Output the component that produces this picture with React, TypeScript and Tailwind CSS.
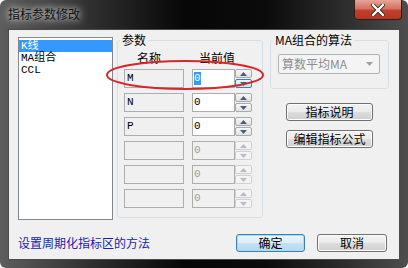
const cjk = "font-['Noto_Sans_CJK_SC',sans-serif]";
const mono = "font-['Liberation_Mono','Noto_Sans_CJK_SC',monospace]";

const Arrow = ({ up, color }: { up: boolean; color: string }) => (
  <svg width="7" height="4" viewBox="0 0 7 4">
    <path d={up ? "M0 4 L3.5 0 L7 4 Z" : "M0 0 L3.5 4 L7 0 Z"} fill={color} />
  </svg>
);

const Spinner = ({ enabled, hot }: { enabled: boolean; hot?: boolean }) => {
  const btn = enabled
    ? "border-[#a9a9a9] bg-[linear-gradient(#f7f7f7,#e3e3e3)]"
    : "border-[#cfcfcf] bg-[#f4f4f4]";
  const arrow = enabled ? "#4a5f80" : "#b9bdc3";
  return (
    <div className="flex flex-col gap-[1px] w-[17px] h-[19px]">
      <div className={`h-[9px] border rounded-[2px] flex items-center justify-center ${btn}`}>
        <Arrow up color={arrow} />
      </div>
      <div
        className={`h-[9px] border rounded-[2px] flex items-center justify-center ${
          hot ? "border-[#3c7fb1] bg-[linear-gradient(#eaf6fd,#bee6fd)]" : btn
        }`}
      >
        <Arrow up={false} color={arrow} />
      </div>
    </div>
  );
};

const ParamRow = ({ name, enabled, selected }: { name: string; enabled: boolean; selected?: boolean }) => (
  <div className="flex items-start h-[19px]">
    <div className={`w-[60px] h-[19px] border border-[#adadad] bg-[#f0f0f0] pl-[2px] pt-[2px] text-[11px] leading-[13px] text-black ${mono}`}>
      {name}
    </div>
    <div
      className={`ml-[8px] w-[43px] h-[19px] border border-[#adadad] pl-[1px] pt-[2px] text-[11px] leading-[13px] ${mono} ${
        enabled ? "bg-white text-black" : "bg-[#f0f0f0] text-[#9c9c9c]"
      }`}
    >
      {selected ? <span className="inline-block bg-[#3399ff] text-white w-[7px]">0</span> : "0"}
    </div>
    <Spinner enabled={enabled} hot={selected} />
  </div>
);

const WinButton = ({ label, width, isDefault }: { label: string; width: string; isDefault?: boolean }) => (
  <div
    className={`${width} h-[18px] rounded-[3px] border flex items-center justify-center text-[12px] text-black ${cjk} ${
      isDefault
        ? "border-[#3c7fb1] bg-[linear-gradient(#ecf6fc_0%,#dcecf8_50%,#c6e1f5_51%,#b4d8f2_100%)] shadow-[inset_0_0_0_1px_#a8dcf6]"
        : "border-[#707070] bg-[linear-gradient(#f2f2f2_0%,#ebebeb_50%,#dddddd_51%,#cfcfcf_100%)] shadow-[inset_0_0_0_1px_#fcfcfc]"
    }`}
  >
    {label}
  </div>
);

export default function App() {
  return (
    <div className="relative w-[408px] h-[268px] overflow-hidden rounded-[6px] bg-[linear-gradient(90deg,#5d5d5d_0%,#303030_22%,#070707_45%,#0b0b0b_65%,#2e2e2e_85%,#4e4e4e_100%)] flex flex-col">
      {/* Title bar */}
      <div className="h-[29px] flex items-start shrink-0">
        <div className={`ml-[8px] mt-[7px] text-[12px] leading-[14px] text-[#111] ${cjk} [text-shadow:0_0_6px_rgba(255,255,255,0.9),0_0_12px_rgba(255,255,255,0.6)]`}>
          指标参数修改
        </div>
        <div className="ml-auto mr-[6px] w-[48px] h-[20px] rounded-b-[4px] border border-t-0 border-[#3a1a14] bg-[linear-gradient(#e7a597_0%,#d47262_45%,#c2402b_55%,#b23621_100%)] flex items-center justify-center">
          <svg width="14" height="12" viewBox="0 0 14 12">
            <path d="M2 1 L12 11 M12 1 L2 11" stroke="#3a2a2a" strokeWidth="4" strokeLinecap="round" />
            <path d="M2 1 L12 11 M12 1 L2 11" stroke="#ffffff" strokeWidth="2.4" strokeLinecap="round" />
          </svg>
        </div>
      </div>

      {/* Client area */}
      <div className="mx-[8px] h-[231px] border border-[#4a4a4a] bg-[#f0f0f0] pl-[9px] pt-[3px] flex flex-col">
        <div className="flex items-start">
          {/* Indicator list */}
          <div className={`mt-[4px] w-[95px] h-[183px] border border-[#828790] bg-white pt-[2px] text-[11px] leading-[12px] ${mono}`}>
            <div className="bg-[#3399ff] text-white pl-[2px] h-[12px]">K线</div>
            <div className="pl-[2px] h-[12px] text-black">MA组合</div>
            <div className="pl-[2px] h-[12px] text-black">CCL</div>
          </div>

          {/* Parameters group */}
          <fieldset className="ml-[4px] w-[146px] h-[185px] border border-[#d5dfe5] rounded-[3px] p-0">
            <legend className={`ml-[2px] px-[2px] text-[12px] leading-[14px] text-black ${cjk}`}>参数</legend>
            <div className="pl-[6px]">
              <div className={`mt-[4px] h-[14px] flex text-[12px] leading-[14px] text-black ${cjk}`}>
                <span className="ml-[13px]">名称</span>
                <span className="ml-[38px]">当前值</span>
              </div>
              <div className="mt-[4px] flex flex-col gap-[5px]">
                <ParamRow name="M" enabled selected />
                <ParamRow name="N" enabled />
                <ParamRow name="P" enabled />
                <ParamRow name="" enabled={false} />
                <ParamRow name="" enabled={false} />
                <ParamRow name="" enabled={false} />
              </div>
            </div>
          </fieldset>

          {/* Right column */}
          <div className="ml-[7px] flex flex-col">
            <fieldset className="w-[119px] h-[56px] border border-[#d5dfe5] rounded-[3px] p-0">
              <legend className={`ml-[2px] px-[2px] text-[12px] leading-[14px] text-black ${cjk}`}>MA组合的算法</legend>
              <div className={`mt-[7px] ml-[7px] w-[102px] h-[20px] border border-[#adb2b5] rounded-[2px] bg-[#f4f4f4] flex items-center pl-[3px] text-[12px] text-[#8d8d8d] ${cjk}`}>
                算数平均MA
                <span className="ml-auto mr-[6px]">
                  <Arrow up={false} color="#a0a0a0" />
                </span>
              </div>
            </fieldset>
            <div className="mt-[14px] ml-[16px] flex flex-col gap-[9px]">
              <WinButton label="指标说明" width="w-[87px]" />
              <WinButton label="编辑指标公式" width="w-[87px]" />
            </div>
          </div>
        </div>

        {/* Bottom row */}
        <div className="mt-[14px] flex items-center h-[18px]">
          <span className={`text-[12px] text-[#1a22a8] ${cjk}`}>设置周期化指标区的方法</span>
          <div className="ml-auto mr-[12px] flex gap-[12px]">
            <WinButton label="确定" width="w-[69px]" isDefault />
            <WinButton label="取消" width="w-[70px]" />
          </div>
        </div>
      </div>

      {/* Red annotation ellipse */}
      <svg className="absolute left-[104px] top-[59px]" width="162" height="32" viewBox="0 0 162 32">
        <ellipse cx="81" cy="16" rx="78" ry="14" fill="none" stroke="#d8262b" strokeWidth="2" />
      </svg>
    </div>
  );
}
